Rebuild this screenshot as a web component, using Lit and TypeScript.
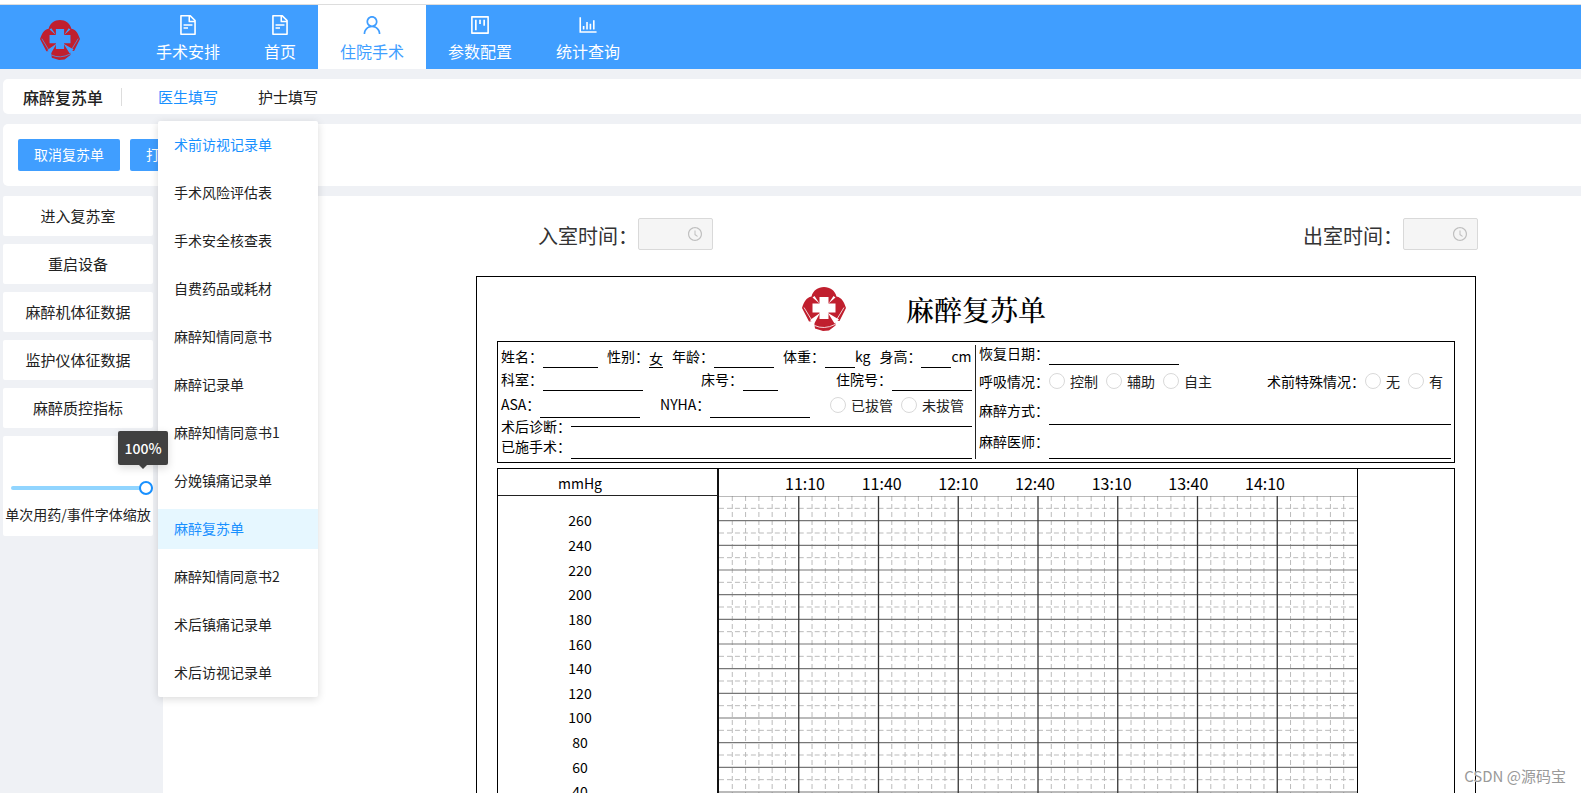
import { LitElement, html, css, svg, nothing } from "lit";
import { customElement, property, state } from "lit/decorators.js";
import { classMap } from "lit/directives/class-map.js";

const ICONS: Record<string, string> = {
  file: "M854.6 288.6L639.4 73.4c-6-6-14.1-9.4-22.6-9.4H192c-17.7 0-32 14.3-32 32v832c0 17.7 14.3 32 32 32h640c17.7 0 32-14.3 32-32V311.3c0-8.5-3.4-16.7-9.4-22.7zM790.2 326H602V137.8L790.2 326zm1.8 562H232V136h302v216a42 42 0 0042 42h216v494zM504 618H320c-4.4 0-8 3.6-8 8v48c0 4.4 3.6 8 8 8h184c4.4 0 8-3.6 8-8v-48c0-4.4-3.6-8-8-8zM312 490v48c0 4.4 3.6 8 8 8h384c4.4 0 8-3.6 8-8v-48c0-4.4-3.6-8-8-8H320c-4.4 0-8 3.6-8 8z",
  user: "M858.5 763.6a374 374 0 00-80.6-119.5 375.63 375.63 0 00-119.5-80.6c-.4-.2-.8-.3-1.2-.5C719.5 518 760 444.7 760 362c0-137-111-248-248-248S264 225 264 362c0 82.7 40.5 156 102.8 201.1-.4.2-.8.3-1.2.5-44.8 18.9-85 46-119.5 80.6a375.63 375.63 0 00-80.6 119.5A371.7 371.7 0 00136 901.8a8 8 0 008 8.2h60c4.4 0 7.9-3.5 8-7.8 2-77.2 33-149.5 87.8-204.3 56.7-56.7 132-87.9 212.2-87.9s155.5 31.2 212.2 87.9C779 752.7 810 825 812 902.2c.1 4.4 3.6 7.8 8 7.8h60a8 8 0 008-8.2c-1-47.8-10.9-94.3-29.5-138.2zM512 534c-45.9 0-89.1-17.9-121.6-50.4S340 407.9 340 362c0-45.9 17.9-89.1 50.4-121.6S466.1 190 512 190s89.1 17.9 121.6 50.4S684 316.1 684 362c0 45.9-17.9 89.1-50.4 121.6S557.9 534 512 534z",
  project: "M295 752h60c4.4 0 8-3.6 8-8V280c0-4.4-3.6-8-8-8h-60c-4.4 0-8 3.6-8 8v464c0 4.4 3.6 8 8 8zm187-280h60c4.4 0 8-3.6 8-8V280c0-4.4-3.6-8-8-8h-60c-4.4 0-8 3.6-8 8v184c0 4.4 3.6 8 8 8zm187 72h60c4.4 0 8-3.6 8-8V280c0-4.4-3.6-8-8-8h-60c-4.4 0-8 3.6-8 8v256c0 4.4 3.6 8 8 8zm211-432H144c-17.7 0-32 14.3-32 32v736c0 17.7 14.3 32 32 32h736c17.7 0 32-14.3 32-32V144c0-17.7-14.3-32-32-32zm-40 728H184V184h656v656z",
  chart: "M888 792H200V168c0-4.4-3.6-8-8-8h-56c-4.4 0-8 3.6-8 8v688c0 4.4 3.6 8 8 8h752c4.4 0 8-3.6 8-8v-56c0-4.4-3.6-8-8-8zm-600-80h56c4.4 0 8-3.6 8-8V560c0-4.4-3.6-8-8-8h-56c-4.4 0-8 3.6-8 8v144c0 4.4 3.6 8 8 8zm152 0h56c4.4 0 8-3.6 8-8V384c0-4.4-3.6-8-8-8h-56c-4.4 0-8 3.6-8 8v320c0 4.4 3.6 8 8 8zm152 0h56c4.4 0 8-3.6 8-8V462c0-4.4-3.6-8-8-8h-56c-4.4 0-8 3.6-8 8v242c0 4.4 3.6 8 8 8zm152 0h56c4.4 0 8-3.6 8-8V304c0-4.4-3.6-8-8-8h-56c-4.4 0-8 3.6-8 8v400c0 4.4 3.6 8 8 8z",
  clock: "M512 64C264.6 64 64 264.6 64 512s200.6 448 448 448 448-200.6 448-448S759.4 64 512 64zm0 820c-205.4 0-372-166.6-372-372s166.6-372 372-372 372 166.6 372 372-166.6 372-372 372zM686.7 638.6L544.1 535.5V288c0-4.4-3.6-8-8-8H488c-4.4 0-8 3.6-8 8v275.4c0 2.6 1.2 5 3.3 6.5l165.4 120.6c3.6 2.6 8.6 1.8 11.2-1.7l28.6-39c2.6-3.7 1.8-8.7-1.8-11.2z",
};

const icon = (name: string) => html`
  <svg class="icon" viewBox="64 64 896 896" fill="currentColor" aria-hidden="true">
    <path d=${ICONS[name]}></path>
  </svg>`;

@customElement("hospital-logo")
export class HospitalLogo extends LitElement {
  static styles = css`
    :host { display: block; }
    svg { display: block; width: 100%; height: 100%; }
  `;

  render() {
    return html`
      <svg viewBox="0 0 44 44" role="img" aria-label="logo">
        <mask id="cut">
          <rect width="44" height="44" fill="#fff"></rect>
          <path fill="#000" d="M17.500 10h9v6.500h7v9h-7V32h-9v-6.500h-7v-9h7z"></path>
          <path fill="#000" d="M18 26 8 33 12 37ZM26 26 37 32.500 32.500 36.500ZM17.500 16.500 10.500 10.500 12.500 9ZM26.500 16.500 33.500 10.500 31.500 9Z"></path>
          <path fill="none" stroke="#000" stroke-width=".8" d="M2 20.500 9 32M42 20.500 35 32M12.500 38.500Q22 43 33 37.500"></path>
        </mask>
        <path mask="url(#cut)" fill="#c01f2e"
          d="M9.500 9.500C11 3.500 16 0 22 0s11 3.500 12.500 9.500C40 10.500 42 15 44 21l-6.500 13L33 33.500l.5 5L27 43.500l-6 .5-8-2.500L12 34l-5 .5L0 21C2 15 4 10.500 9.500 9.500z"></path>
      </svg>`;
  }
}

@customElement("vitals-chart")
export class VitalsChart extends LitElement {
  @property({ type: Array }) times: string[] = [];

  static styles = css`
    :host {
      display: grid;
      grid-template-columns: 221fr 639fr 96fr;
      grid-template-rows: 27px 370px;
      border: 1px solid #000;
      color: #000;
    }
    .unit, .scale { text-align: center; font-size: 14px; padding-right: 55px; }
    .unit {
      line-height: 28px;
      border-bottom: 1px solid #222;
      border-right: 2px solid #111;
    }
    .scale {
      display: grid;
      grid-template-rows: repeat(14, 1fr);
      align-items: center;
      line-height: 20px;
      padding-top: 12px;
      padding-bottom: 13px;
      border-right: 2px solid #111;
    }
    .times {
      display: flex;
      justify-content: space-between;
      padding: 0 72px 0 66px;
      font-size: 16px;
      line-height: 28px;
      border-right: 1px solid #000;
    }
    .plot { border-right: 1px solid #000; min-width: 0; }
    .plot svg { display: block; width: 100%; height: 100%; }
    .major-v { stroke: #333; stroke-width: 1.3; }
    .major-h { stroke: #777; stroke-width: 1.2; }
    .minor { stroke: #bbb; stroke-width: 1; stroke-dasharray: 5 3; }
  `;

  private grid() {
    const rows = 15, cols = 8, w = 640, h = 370;
    const rowH = h / rows, colW = w / cols;
    const lines = [];
    for (let r = 0; r < rows; r++) {
      const y = (r + 0.5) * rowH;
      lines.push(svg`<line class="minor" x1="0" x2=${w} y1=${y} y2=${y}></line>`);
    }
    for (let c = 0; c < cols * 6; c++) {
      if (c % 6 === 0) continue;
      const x = (c * colW) / 6;
      lines.push(svg`<line class="minor" x1=${x} x2=${x} y1="0" y2=${h}></line>`);
    }
    for (let r = 0; r <= rows; r++) {
      const y = r * rowH;
      lines.push(svg`<line class="major-h" x1="0" x2=${w} y1=${y} y2=${y}></line>`);
    }
    for (let c = 1; c < cols; c++) {
      lines.push(svg`<line class="major-v" x1=${c * colW} x2=${c * colW} y1="0" y2=${h}></line>`);
    }
    return lines;
  }

  render() {
    const scale = Array.from({ length: 14 }, (_, i) => 260 - i * 20);
    return html`
      <div class="unit">mmHg</div>
      <div class="times">${this.times.map((t) => html`<span>${t}</span>`)}</div>
      <div></div>
      <div class="scale">${scale.map((v) => html`<span>${v}</span>`)}</div>
      <div class="plot">
        <svg viewBox="0 0 640 370" preserveAspectRatio="none" aria-hidden="true">${this.grid()}</svg>
      </div>
      <div></div>`;
  }
}

@customElement("recovery-sheet")
export class RecoverySheet extends LitElement {
  static styles = css`
    :host { display: block; border: 1px solid #000; padding: 0 20px 20px; color: #000; font-size: 14px; }
    .heading {
      display: grid;
      grid-template-columns: 1fr auto 1fr;
      column-gap: 60px;
      align-items: center;
      height: 64px;
    }
    .heading hospital-logo { width: 44px; height: 44px; justify-self: end; }
    h1 {
      margin: 0;
      font: 500 28px/40px STSong, SimSun, "Noto Serif CJK SC", "Noto Serif SC", "Noto Sans CJK SC", serif;
    }
    .info { display: flex; border: 1px solid #000; height: 120px; margin-bottom: 5px; }
    .panel { display: flex; flex-direction: column; padding: 0 3px; min-width: 0; }
    .left { flex: 471; }
    .right { flex: 472; }
    .rule { width: 1px; background: #222; margin: 3px 0; }
    .row { display: flex; align-items: flex-end; white-space: nowrap; }
    .spread { justify-content: space-between; }
    .gap { gap: 9px; }
    .field { display: flex; align-items: inherit; align-self: stretch; }
    .grow { flex: 1; }
    .cap { line-height: 20px; padding-bottom: 2px; }
    input[type="text"] {
      box-sizing: border-box;
      height: 20px;
      padding: 0;
      border: 0;
      border-bottom: 1px solid #000;
      border-radius: 0;
      background: none;
      font: inherit;
      color: inherit;
      outline: none;
      align-self: flex-end;
    }
    .w14 { width: 14px; }
    .w30 { width: 30px; }
    .w35 { width: 35px; }
    .w55 { width: 55px; }
    .w60 { width: 60px; }
    .w80 { width: 80px; }
    .w100 { width: 100px; }
    .w130 { width: 130px; }
    .fill { flex: 1; min-width: 0; }
    .mid { align-items: center; }
    .h26 { height: 26px; }
    .h23 { height: 23px; }
    .h27 { height: 27px; }
    .h17 { height: 17px; }
    .h24 { height: 24px; }
    .h32 { height: 32px; }
    .h28 { height: 28px; }
    .h34 { height: 34px; }
    .h17 input[type="text"] { align-self: flex-start; height: 9px; }
    .radio { display: flex; align-items: center; gap: 5px; margin-right: 8px; line-height: 20px; color: #222; }
    .radio input {
      appearance: none;
      box-sizing: border-box;
      width: 16px;
      height: 16px;
      margin: 0;
      border: 1px solid #d9d9d9;
      border-radius: 50%;
      background: #fff;
    }
    .radio input:checked { border: 5px solid #1890ff; }
  `;

  private field(label: string, id: string, width: string, value = "", unit = "") {
    return html`
      <div class="field ${width === "fill" ? "grow" : ""}">
        <label class="cap" for=${id}>${label}</label>
        <input type="text" id=${id} class=${width} .value=${value} />
        ${unit ? html`<span class="cap">${unit}</span>` : nothing}
      </div>`;
  }

  private radios(name: string, options: string[]) {
    return options.map(
      (o) => html`<label class="radio"><input type="radio" name=${name} value=${o} />${o}</label>`,
    );
  }

  render() {
    return html`
      <div class="heading"><hospital-logo></hospital-logo><h1>麻醉复苏单</h1></div>
      <div class="info">
        <div class="panel left">
          <div class="row gap h26">
            ${this.field("姓名：", "name", "w55")}
            ${this.field("性别：", "sex", "w14", "女")}
            ${this.field("年龄：", "age", "w60")}
            ${this.field("体重：", "weight", "w30", "", "kg")}
            ${this.field("身高：", "height", "w30", "", "cm")}
          </div>
          <div class="row spread h23">
            ${this.field("科室：", "dept", "w100")}
            ${this.field("床号：", "bed", "w35")}
            ${this.field("住院号：", "admission", "w80")}
          </div>
          <div class="row spread mid h27">
            ${this.field("ASA：", "asa", "w100")}
            ${this.field("NYHA：", "nyha", "w100")}
            <div class="field">${this.radios("tube", ["已拔管", "未拔管"])}</div>
          </div>
          <div class="row mid h17">${this.field("术后诊断：", "diagnosis", "fill")}</div>
          <div class="row mid h24">${this.field("已施手术：", "operation", "fill")}</div>
        </div>
        <div class="rule"></div>
        <div class="panel right">
          <div class="row h23">${this.field("恢复日期：", "date", "w130")}</div>
          <div class="row spread mid h32">
            <div class="field"><span>呼吸情况：</span>${this.radios("breath", ["控制", "辅助", "自主"])}</div>
            <div class="field"><span>术前特殊情况：</span>${this.radios("special", ["无", "有"])}</div>
          </div>
          <div class="row mid h28">${this.field("麻醉方式：", "method", "fill")}</div>
          <div class="row mid h34">${this.field("麻醉医师：", "doctor", "fill")}</div>
        </div>
      </div>
      <vitals-chart .times=${["11:10", "11:40", "12:10", "12:40", "13:10", "13:40", "14:10"]}></vitals-chart>`;
  }
}

@customElement("app-root")
export class AppRoot extends LitElement {
  @state() private nav = 2;
  @state() private form = 8;
  @state() private zoom = 100;

  private readonly navItems = [
    ["file", "手术安排"],
    ["file", "首页"],
    ["user", "住院手术"],
    ["project", "参数配置"],
    ["chart", "统计查询"],
  ];

  private readonly forms = [
    "术前访视记录单", "手术风险评估表", "手术安全核查表", "自费药品或耗材",
    "麻醉知情同意书", "麻醉记录单", "麻醉知情同意书1", "分娩镇痛记录单",
    "麻醉复苏单", "麻醉知情同意书2", "术后镇痛记录单", "术后访视记录单",
  ];

  private readonly actions = ["进入复苏室", "重启设备", "麻醉机体征数据", "监护仪体征数据", "麻醉质控指标"];

  static styles = css`
    :host {
      display: flex;
      flex-direction: column;
      position: relative;
      box-sizing: border-box;
      height: 100vh;
      padding-top: 4px;
      overflow: hidden;
      background: #fff;
      font-family: "Microsoft YaHei", "Noto Sans CJK SC", sans-serif;
      font-size: 14px;
      color: #222;
    }
    a { color: inherit; text-decoration: none; }
    button { font: inherit; border: 0; cursor: pointer; }
    .icon { display: block; width: 20px; height: 20px; }

    header {
      display: flex;
      flex: none;
      height: 64px;
      border-top: 1px solid #ddd;
      background: #409eff;
      color: #fff;
    }
    .brand { display: flex; align-items: center; width: 94px; padding: 6px 0 0 40px; }
    .brand hospital-logo { width: 40px; height: 40px; }
    nav { display: flex; }
    .nav-item {
      display: flex;
      flex-direction: column;
      align-items: center;
      gap: 4px;
      padding: 10px 22px 0;
      font-size: 16px;
      line-height: 24px;
    }
    .nav-item.on { background: #fff; color: #409eff; }

    .page { flex: 1; min-height: 0; display: flex; flex-direction: column; gap: 10px; padding: 10px 0 0 3px; background: #eff1f5; }
    .tabs { display: flex; align-items: center; flex: none; height: 35px; padding-left: 20px; border-radius: 5px 0 0 5px; background: #fff; }
    .page-name { margin: 0; padding-right: 18px; border-right: 1px solid #ddd; font-size: 16px; line-height: 18px; font-weight: 500; }
    .tab-list { display: flex; gap: 40px; padding-left: 36px; font-size: 15px; line-height: 35px; }
    .tab { position: relative; }
    .tab > .on { color: #1890ff; }
    .menu {
      position: absolute;
      z-index: 10;
      top: 42px;
      left: 0;
      width: 160px;
      margin: 0;
      padding: 4px 0;
      box-sizing: border-box;
      display: flex;
      flex-direction: column;
      gap: 8px;
      list-style: none;
      border-radius: 2px;
      background: #fff;
      box-shadow: 0 2px 8px rgba(0, 0, 0, 0.15);
      font-size: 14px;
      line-height: 38px;
    }
    .menu a { display: block; padding: 0 16px 2px; white-space: nowrap; }
    .menu .hover { color: #1890ff; }
    .menu .on { color: #1890ff; background: #e6f7ff; }

    .toolbar { display: flex; flex: none; align-items: center; gap: 10px; height: 62px; padding-left: 15px; border-radius: 5px 0 0 5px; background: #fff; }
    .primary { height: 32px; padding: 0 16px 2px; border-radius: 2px; background: #409eff; color: #fff; line-height: 30px; }

    .body { flex: 1; min-height: 0; display: flex; gap: 10px; }
    aside { display: flex; flex-direction: column; gap: 8px; width: 150px; flex: none; }
    .action { height: 40px; flex: none; padding: 0 0 2px; border-radius: 2px; background: #fff; color: #222; font-size: 15px; }
    .zoom { position: relative; display: flex; flex-direction: column; height: 100px; flex: none; box-sizing: border-box; padding: 45px 0 0 8px; border-radius: 2px; background: #fff; }
    .zoom input { appearance: none; width: 100%; height: 14px; margin: 0; background: none; }
    .zoom input::-webkit-slider-runnable-track { height: 4px; border-radius: 2px; background: #91d5ff; }
    .zoom input::-webkit-slider-thumb {
      appearance: none;
      box-sizing: border-box;
      width: 14px;
      height: 14px;
      margin-top: -5px;
      border: 2px solid #1890ff;
      border-radius: 50%;
      background: #fff;
    }
    .zoom label { margin: 9px 0 0 -8px; text-align: center; line-height: 20px; white-space: nowrap; }
    .tip {
      position: absolute;
      z-index: 11;
      top: -5px;
      right: -15px;
      width: 50px;
      border-radius: 2px;
      background: #404040;
      color: #fff;
      font-weight: 500;
      text-align: center;
      line-height: 34px;
      box-shadow: 0 3px 8px rgba(0, 0, 0, 0.15);
    }
    .tip::after { content: ""; position: absolute; left: 21px; top: 34px; border: 4px solid transparent; border-top-color: #404040; }

    main { flex: 1; min-width: 0; overflow: hidden; padding: 22px 105px 0 313px; background: #fff; }
    .room-times { display: flex; justify-content: space-between; padding-left: 62px; margin: 0 -2px 22px 0; }
    .room-time { display: flex; align-items: flex-start; font-size: 20px; line-height: 36px; color: #333; white-space: nowrap; }
    .picker { display: flex; align-items: center; box-sizing: border-box; width: 75px; height: 32px; padding-right: 10px; border: 1px solid #d9d9d9; border-radius: 2px; background: #f5f5f5; color: #bfbfbf; }
    .picker input { flex: 1; min-width: 0; height: 100%; padding: 0 0 0 11px; border: 0; background: none; font: inherit; font-size: 14px; }
    .picker .icon { width: 14px; height: 14px; }

    .mark { position: absolute; z-index: 12; right: 15px; bottom: 6px; font-size: 15px; line-height: 22px; color: #999; text-shadow: 0 0 1px #fff; }
  `;

  private roomTime(label: string, id: string) {
    return html`
      <div class="room-time">
        <label for=${id}>${label}</label>
        <span class="picker"><input id=${id} type="text" disabled />${icon("clock")}</span>
      </div>`;
  }

  render() {
    return html`
      <header>
        <div class="brand"><hospital-logo></hospital-logo></div>
        <nav>
          ${this.navItems.map(
            ([glyph, label], i) => html`
              <a href="#" class=${classMap({ "nav-item": true, on: this.nav === i })}
                @click=${() => (this.nav = i)}>${icon(glyph)}<span>${label}</span></a>`,
          )}
        </nav>
      </header>
      <div class="page">
        <div class="tabs">
          <h2 class="page-name">麻醉复苏单</h2>
          <div class="tab-list">
            <div class="tab">
              <a href="#" class="on">医生填写</a>
              <ul class="menu">
                ${this.forms.map(
                  (f, i) => html`<li><a href="#" class=${classMap({ hover: i === 0, on: this.form === i })}
                    @click=${() => (this.form = i)}>${f}</a></li>`,
                )}
              </ul>
            </div>
            <div class="tab"><a href="#">护士填写</a></div>
          </div>
        </div>
        <div class="toolbar">
          <button class="primary">取消复苏单</button>
          <button class="primary">打印</button>
        </div>
        <div class="body">
          <aside>
            ${this.actions.map((a) => html`<button class="action">${a}</button>`)}
            <div class="zoom">
              <div class="tip">${this.zoom}%</div>
              <input id="zoom" type="range" min="0" max="100" .value=${String(this.zoom)}
                @input=${(e: Event) => (this.zoom = Number((e.target as HTMLInputElement).value))} />
              <label for="zoom">单次用药/事件字体缩放</label>
            </div>
          </aside>
          <main>
            <div class="room-times">
              ${this.roomTime("入室时间：", "enter")}
              ${this.roomTime("出室时间：", "leave")}
            </div>
            <recovery-sheet></recovery-sheet>
          </main>
        </div>
      </div>
      <div class="mark">CSDN @源码宝</div>`;
  }
}
